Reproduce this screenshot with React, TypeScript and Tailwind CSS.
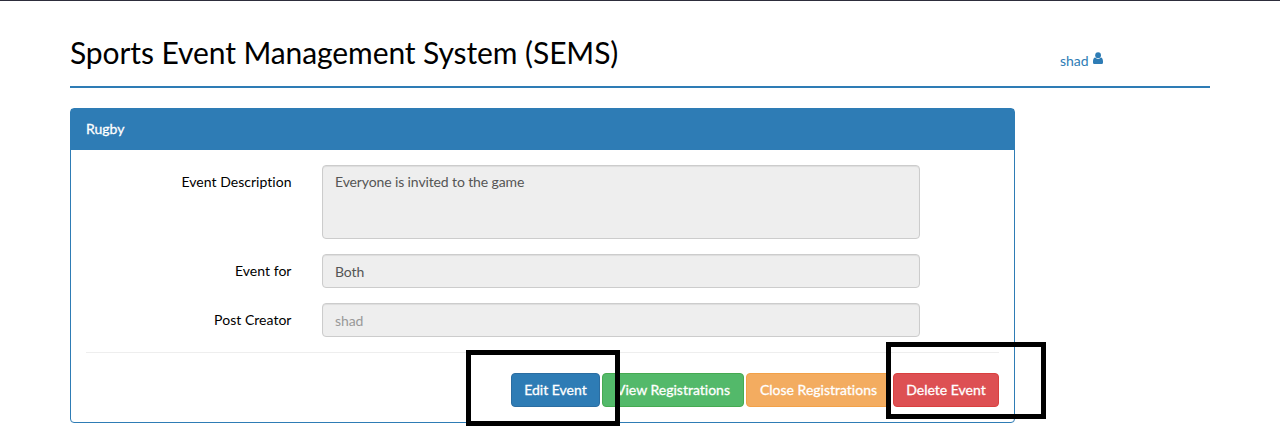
import type { ReactNode } from "react";

function UserIcon() {
  return (
    <svg className="mt-[-5px] ml-1 h-[13px] w-[11px]" viewBox="0 0 11 13" fill="#2e7cb5">
      <circle cx="5.1" cy="3.2" r="2.9" />
      <path d="M2.3 5.400C.7 5.500 0 7 0 9.400v1c0 1 .7 1.700 1.700 1.700h6.600c1 0 1.700-.7 1.700-1.700v-1c0-2.400-.7-3.900-2.200-4-.7.9-1.600 1.300-2.700 1.300s-2.100-.4-2.800-1.300z" />
    </svg>
  );
}

function Field({ label, children }: { label: string; children: ReactNode }) {
  return (
    <div className="mb-[15px] flex">
      <label className="w-[206px] pt-[7px] pr-[0.5px] text-right tracking-[0.03px]">{label}</label>
      <div className="ml-[30px] w-[598px]">{children}</div>
    </div>
  );
}

const control =
  "block w-full resize-none rounded-[4px] border border-[#ccc] bg-[#eee] px-3 py-[6px] leading-[20px] tracking-[-0.12px] shadow-[inset_0_1px_1px_rgba(0,0,0,0.075)] outline-none";
const button =
  "h-[34px] rounded-[4px] border text-center leading-[20px] whitespace-nowrap text-white [-webkit-text-stroke:0.3px_white]";

export default function App() {
  return (
    <div className="relative h-[437px] overflow-hidden border-t border-[#2d2d3b] bg-white font-['Lato',sans-serif] text-[14px] leading-[20px] text-black [font-variant-ligatures:none]">
      <div className="mx-auto w-[1140px]">
        <header className="flex h-[87px] border-b-2 border-[#2e7cb5]">
          <h1 className="w-[990px] pt-[35px] text-[30px] leading-[33px] font-normal tracking-[-0.09px]">
            Sports Event Management System (SEMS)
          </h1>
          <a className="mt-[50px] flex h-5 items-center self-start text-[#2e7cb5]" href="#">
            shad
            <UserIcon />
          </a>
        </header>
        <main className="mt-5 w-[945px] rounded-[4px] border border-[#2e7cb5]">
          <h2 className="h-[41px] bg-[#2e7cb5] px-[15px] py-[10px] text-white [-webkit-text-stroke:0.3px_white]">
            Rugby
          </h2>
          <div className="p-[15px]">
            <Field label="Event Description">
              <textarea className={`${control} h-[74px] text-[#555]`} readOnly value="Everyone is invited to the game" />
            </Field>
            <Field label="Event for">
              <input className={`${control} h-[34px] text-[#555]`} readOnly value="Both" />
            </Field>
            <Field label="Post Creator">
              <input className={`${control} h-[34px] text-[#999]`} readOnly value="shad" />
            </Field>
            <div className="flex justify-end gap-[2px] border-t border-[#eee] pt-5">
              <button className={`${button} w-[89px] border-[#2b6da1] bg-[#2e7cb5]`}>Edit Event</button>
              <button className={`${button} w-[142px] border-[#46aa51] bg-[#53b96a]`}>View Registrations</button>
              <button className={`${button} w-[145px] border-[#f2a148] bg-[#f3ac60]`}>Close Registrations</button>
              <button className={`${button} w-[106px] border-[#d9403f] bg-[#dd5053]`}>Delete Event</button>
            </div>
          </div>
        </main>
      </div>
      <div className="absolute top-[349px] left-[466px] h-[76px] w-[154px] border-[5px] border-black" />
      <div className="absolute top-[341px] left-[886px] h-[77px] w-[160px] border-[5px] border-black" />
    </div>
  );
}
